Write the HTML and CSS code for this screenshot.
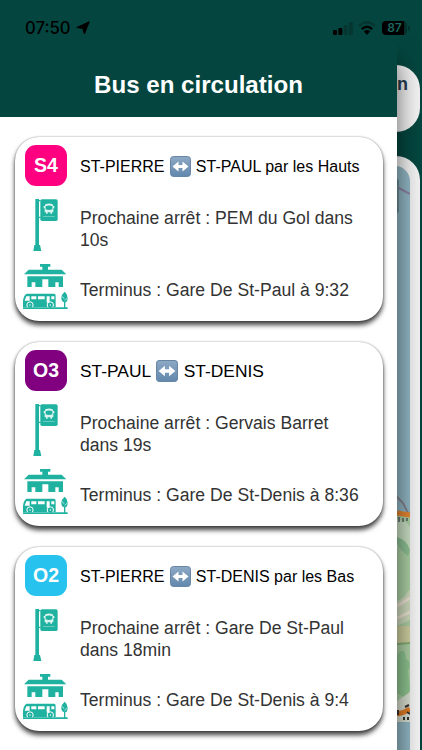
FILE: index.html
```
<!DOCTYPE html>
<html lang="fr">
<head>
  <meta charset="UTF-8" />
  <meta name="viewport" content="width=device-width, initial-scale=1.0" />
  <title>Bus en circulation</title>
  <link rel="stylesheet" href="styles.css">
</head>
<body>
  <!-- symboles réutilisés dans chaque carte -->
  <svg class="symbols" width="0" height="0">
    <symbol id="stop" viewBox="33 204 150 162">
      <path fill="#20b2a0" d="M76 207h11v138h3l4 18H70l3-18h3z" />
      <path fill="#20b2a0" d="M86 210h6v4h-6zM86 260h6v4h-6z" />
      <rect x="91" y="208" width="52" height="65" rx="5" fill="#20b2a0" />
      <path fill="#d9f3ef" fill-rule="evenodd" d="M106 223q11-5 22 0l2 5h3v7h-3v12h-4v4h-5v-4h-8v4h-5v-4h-4v-12h-3v-7h3zM107 228v10q10 4 20 0v-10q-10-3-20 0z" />
      <path fill="#8fd8ce" d="M99 258h35v2H99z" />
    </symbol>
    <symbol id="station" viewBox="33 399 150 141">
      <path fill="#20b2a0" d="M90 402h31v8h-7v9h41l14 14H42l14-14h41v-9h-7z" />
      <path fill="#20b2a0" d="M52 439h107v32h-13v-14h-10v14h-21v-23H97v23H76v-14H65v14H52z" />
      <path fill="#20b2a0" fill-rule="evenodd" d="M50 491h82q5 0 5 6v34H39v-19q2-17 11-21zM49 499l-5 13h15v-13zM64 499v9h15v-9zM84 499v9h20v-9zM110 499v19h9v-19zM124 499v9h9v-9z" />
      <g fill="#20b2a0" stroke="#fff" stroke-width="3">
        <circle cx="60" cy="525" r="9.5" /><circle cx="121" cy="525" r="9.5" />
      </g>
      <g fill="#fff"><circle cx="60" cy="525" r="2" /><circle cx="121" cy="525" r="2" /></g>
      <path fill="#20b2a0" d="M39 532h134v5H39zM164 485q9 7 9 18 0 12-7 14v17h-4v-17q-9-3-8-15 1-9 10-17z" />
      <path stroke="#fff" stroke-width="2" d="M155 499l8 7M172 504l-8 8" />
    </symbol>
    <symbol id="arrows" viewBox="0 0 21 21">
      <rect x=".5" y=".5" width="20" height="20" rx="3" fill="url(#key)" stroke="#6786a6" />
      <path fill="#fff" d="M2.5 10.5l6-5v3.4h4V5.5l6 5-6 5v-3.4h-4v3.4z" />
    </symbol>
    <linearGradient id="key" x2="0" y2="1">
      <stop stop-color="#8da9c4" /><stop offset="1" stop-color="#6288ad" />
    </linearGradient>
  </svg>

  <div class="page">
    <div class="pill">n</div>
    <div class="map-card">
      <svg class="map" width="33" height="584" viewBox="0 0 33 584">
        <rect width="33" height="584" fill="#91b7c5" />
        <path d="M18 20l15 8" stroke="#8e83a5" stroke-width="2" />
        <rect x="10" y="12" width="12" height="36" rx="4" fill="#708f9b" />
        <path d="M18 329l8 8 7 14" fill="none" stroke="#85838f" stroke-width="2" />
        <path d="M20 349h13v206H20z" fill="#acd0a5" />
        <path d="M20 353l9 3 4 5v25l-8-12-5 8z" fill="#c9dfc3" />
        <path d="M20 371q10 3 13 13l-2 6q-8-6-11-12z" fill="#8fc295" />
        <path d="M20 435l7-4 6-8v31l-13 6z" fill="#cedabc" />
        <path d="M20 440l13-8M20 452l13-6" stroke="#eee4d6" stroke-width="3" />
        <path d="M20 460h13v17l-13 2z" fill="#cfd0a0" />
        <path d="M20 478l13-1" stroke="#88af76" stroke-width="2" />
        <path d="M20 489q8-10 9 4 6 3 2 12l2 19-5 8-8-5z" fill="#8fc490" />
        <path d="M20 535l13-9v30H20z" fill="#d9dfd1" />
        <path d="M20 347l13 2" stroke="#e7872f" stroke-width="5" />
        <path d="M22 351v5M26 352v4M30 352v3" stroke="#596066" stroke-width="1.5" />
        <path d="M20 548q7-1 13-5" fill="none" stroke="#e27c24" stroke-width="5" />
        <path d="M21 544v5M28 541l4-2M30 546l3 2M27 551v3M31 551v3" stroke="#34342f" stroke-width="2" />
      </svg>
    </div>
  </div>

  <div class="drawer">
    <header class="header">
      <h1>Bus en circulation</h1>
    </header>

    <div class="list">
      <div class="card">
        <div class="icon-cell"><span class="badge pink">S4</span></div>
        <div class="line-name">ST-PIERRE <svg class="arrows"><use href="#arrows" /></svg> ST-PAUL par les Hauts</div>
        <div class="icon-cell"><svg class="stop"><use href="#stop" /></svg></div>
        <div class="next">Prochaine arrêt : PEM du Gol dans 10s</div>
        <div class="icon-cell"><svg class="station"><use href="#station" /></svg></div>
        <div class="terminus">Terminus : Gare De St-Paul à 9:32</div>
      </div>

      <div class="card">
        <div class="icon-cell"><span class="badge purple">O3</span></div>
        <div class="line-name large">ST-PAUL <svg class="arrows"><use href="#arrows" /></svg> ST-DENIS</div>
        <div class="icon-cell"><svg class="stop"><use href="#stop" /></svg></div>
        <div class="next">Prochaine arrêt : Gervais Barret dans 19s</div>
        <div class="icon-cell"><svg class="station"><use href="#station" /></svg></div>
        <div class="terminus">Terminus : Gare De St-Denis à 8:36</div>
      </div>

      <div class="card">
        <div class="icon-cell"><span class="badge blue">O2</span></div>
        <div class="line-name">ST-PIERRE <svg class="arrows"><use href="#arrows" /></svg> ST-DENIS par les Bas</div>
        <div class="icon-cell"><svg class="stop"><use href="#stop" /></svg></div>
        <div class="next">Prochaine arrêt : Gare De St-Paul dans 18min</div>
        <div class="icon-cell"><svg class="station"><use href="#station" /></svg></div>
        <div class="terminus">Terminus : Gare De St-Denis à 9:4</div>
      </div>
    </div>
  </div>

  <div class="status-bar">
    <span class="time">07:50</span>
    <svg class="location" width="14" height="14" viewBox="0 0 14 14"><path d="M13.2.8L8.4 13 6.8 7.4.8 6.5z" stroke="#000" stroke-width="1" stroke-linejoin="round" /></svg>
    <svg class="signal" width="20" height="14" viewBox="0 0 20 14">
      <rect x="0" y="9" width="4" height="5" rx="1" /><rect x="5.3" y="7" width="4" height="7" rx="1" />
      <g fill="#063630"><rect x="10.6" y="4" width="4" height="10" rx="1" /><rect x="15.9" y="1" width="4" height="13" rx="1" /></g>
    </svg>
    <svg class="wifi" width="18" height="14" viewBox="0 0 18 14">
      <path d="M1 5q8-7.5 16 0" fill="none" stroke="#06362f" stroke-width="2.4" />
      <path d="M3.8 8.2q5.2-5 10.4 0" fill="none" stroke="#000" stroke-width="2.3" />
      <path d="M5.8 10.5q3.2-2.8 6.4 0L9 13.8z" />
    </svg>
    <span class="battery">87</span>
    <span class="battery-tip"></span>
  </div>
</body>
</html>
```
FILE: styles.css
```
* {
  box-sizing: border-box;
}
body {
  margin: 0;
  width: 422px;
  height: 750px;
  position: relative;
  overflow: hidden;
  background: #04463f;
  font-family: "Liberation Sans", Arial, sans-serif;
}
.symbols {
  position: absolute;
}
/* page derrière le volet */
.page {
  height: 750px;
  padding: 65px 2px 0 0;
  display: flex;
  flex-direction: column;
  align-items: flex-end;
}
.pill {
  width: 80px;
  height: 67px;
  flex: none;
  border-radius: 24px;
  background: #f2f2f2;
  color: #263c50;
  font-size: 18px;
  font-weight: bold;
  text-align: right;
  padding: 9px 12px 0 0;
}
.map-card {
  width: 100px;
  height: 594px;
  flex: none;
  margin-top: 24px;
  padding: 10px 10px 0 0;
  border-radius: 24px 24px 0 0;
  background: #f2f2f2;
  display: flex;
  justify-content: flex-end;
}
.map {
  border-top-right-radius: 15px;
}
/* volet */
.drawer {
  position: absolute;
  top: 0;
  left: 0;
  width: 397px;
  height: 750px;
  background: #fff;
  box-shadow: 0 60px 24px rgba(0, 0, 0, 0.6);
}
.header {
  height: 117px;
  padding-top: 70px;
  background: #04463f;
  color: #fff;
  text-align: center;
}
h1 {
  margin: 0;
  font-size: 24.1px;
  line-height: 30px;
}
.list {
  padding: 20px 14px 0 15px;
  display: flex;
  flex-direction: column;
  gap: 21px;
}
.card {
  height: 184px;
  padding-top: 8px;
  border-radius: 24px;
  background: #fff;
  box-shadow: 0 4px 5px rgba(0, 0, 0, 0.75), 0 0 2px rgba(0, 0, 0, 0.4);
  display: grid;
  grid-template-columns: 62px 1fr;
  grid-template-rows: 42px 54px 47px;
  row-gap: 11px;
  column-gap: 3px;
  color: #333;
  font-size: 17.6px;
  line-height: 22px;
}
.icon-cell {
  display: flex;
  justify-content: center;
}
.badge {
  width: 42px;
  height: 41px;
  border-radius: 11px;
  color: #fff;
  font-size: 19.5px;
  font-weight: bold;
  line-height: 41px;
  text-align: center;
}
.pink { background: #ff0080; }
.purple { background: #800080; }
.blue { background: #27c2ee; }
.line-name {
  color: #000;
  font-size: 16px;
  line-height: 43px;
  white-space: nowrap;
}
.line-name.large {
  font-size: 17.4px;
}
.arrows {
  width: 21px;
  height: 21px;
  margin: 0 .5px 0 1px;
  vertical-align: -5px;
}
.large .arrows {
  width: 22px;
  height: 22px;
}
.stop {
  width: 50px;
  height: 54px;
}
.station {
  width: 50px;
  height: 47px;
}
.next {
  padding-top: 9px;
  padding-right: 20px;
}
.terminus {
  padding-top: 16px;
}
/* barre d'état */
.status-bar {
  position: absolute;
  top: 18px;
  left: 0;
  width: 422px;
  height: 20px;
  padding-left: 25px;
  display: flex;
  align-items: center;
}
.time {
  width: 47px;
  font-family: Inter, sans-serif;
  font-size: 16.7px;
  font-weight: 500;
}
.location {
  margin-left: 4px;
}
.signal {
  margin-left: 243px;
}
.wifi {
  margin-left: 5px;
}
.battery {
  width: 25px;
  height: 14px;
  margin-left: 6px;
  border-radius: 4px;
  background: linear-gradient(to right, #000 22px, #06302b 22px);
  color: #1c6a60;
  font-family: Inter, sans-serif;
  font-size: 12px;
  font-weight: 600;
  line-height: 14px;
  text-align: center;
}
.battery-tip {
  width: 2px;
  height: 5px;
  margin-left: 1px;
  border-radius: 0 2px 2px 0;
  background: #06302b;
}
```
